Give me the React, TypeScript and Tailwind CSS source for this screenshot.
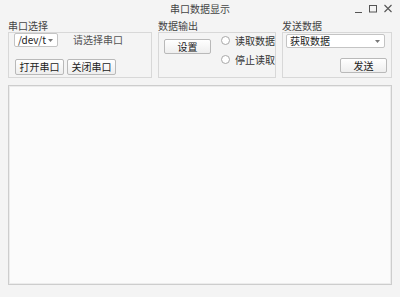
import React from "react";

const font = { fontFamily: '"Noto Sans CJK SC", "Noto Sans", sans-serif' };

function Combo({ text, className }: { text: string; className: string }) {
  return (
    <div
      className={`flex h-[14px] items-center justify-between rounded-[2px] border border-[#c4c4c4] bg-white pl-[3px] pr-[4px] text-[10px] leading-[12px] text-[#222] ${className}`}
    >
      <span className="whitespace-nowrap">{text}</span>
      <svg width="5" height="3" viewBox="0 0 5 3" className="shrink-0">
        <path d="M0 0 L5 0 L2.5 3 Z" fill="#777" />
      </svg>
    </div>
  );
}

function Btn({ text, className }: { text: string; className: string }) {
  return (
    <div
      className={`flex items-center justify-center rounded-[2px] border border-[#b9b9b9] bg-gradient-to-b from-white to-[#eeeeee] text-[10px] leading-[12px] text-[#222] ${className}`}
    >
      {text}
    </div>
  );
}

function Radio({ label }: { label: string }) {
  return (
    <div className="flex h-[13px] items-center gap-[5px] whitespace-nowrap">
      <div className="h-[9px] w-[9px] shrink-0 rounded-full border border-[#a8a8a8] bg-white" />
      <span className="text-[10px] leading-[12px] text-[#333]">{label}</span>
    </div>
  );
}

function Group({
  title,
  width,
  children,
}: {
  title: string;
  width: string;
  children: React.ReactNode;
}) {
  return (
    <div className={`flex flex-col ${width}`}>
      <p className="h-[12px] text-[10px] leading-[12px] text-[#444]">{title}</p>
      <div className="h-[46px] overflow-hidden border border-[#d8d8d8] bg-[#f4f4f4]">
        {children}
      </div>
    </div>
  );
}

export default function App() {
  return (
    <div className="h-[297px] w-[400px] overflow-hidden bg-[#f4f4f4]" style={font}>
      {/* title bar */}
      <div className="relative flex h-[18px] items-center justify-center">
        <span className="text-[10px] leading-[12px] text-[#444]">串口数据显示</span>
        <div className="absolute right-[8px] top-[4px] flex items-center gap-[7px]">
          <svg width="7" height="9" viewBox="0 0 7 9">
            <path d="M0 8.5 H7" stroke="#555" strokeWidth="1" />
          </svg>
          <svg width="8" height="9" viewBox="0 0 8 9">
            <rect x="0.5" y="1.5" width="7" height="6.5" fill="none" stroke="#555" strokeWidth="1" />
          </svg>
          <svg width="8" height="9" viewBox="0 0 8 9">
            <path d="M0.5 1 L7.5 8 M7.5 1 L0.5 8" stroke="#555" strokeWidth="1.1" />
          </svg>
        </div>
      </div>

      {/* group boxes */}
      <div className="mt-[2px] flex pl-[8px]">
        <Group title="串口选择" width="w-[144px]">
          <div className="flex">
            <Combo text="/dev/t" className="ml-[5px] w-[44px]" />
            <span className="ml-[15px] mt-[1px] text-[10px] leading-[12px] text-[#555]">
              请选择串口
            </span>
          </div>
          <div className="mt-[12px] flex gap-[3px] pl-[6px]">
            <Btn text="打开串口" className="h-[16px] w-[49px]" />
            <Btn text="关闭串口" className="h-[16px] w-[49px]" />
          </div>
        </Group>

        <div className="ml-[6px]">
          <Group title="数据输出" width="w-[118px]">
            <div className="flex">
              <Btn text="设置" className="ml-[5px] mt-[6px] h-[15px] w-[48px]" />
              <div className="ml-[10px] mt-[1px] flex flex-col gap-[6px]">
                <Radio label="读取数据" />
                <Radio label="停止读取" />
              </div>
            </div>
          </Group>
        </div>

        <div className="ml-[6px]">
          <Group title="发送数据" width="w-[110px]">
            <div className="flex flex-col">
              <Combo text="获取数据" className="ml-[3px] mt-[1px] w-[99px]" />
              <div className="mt-[10px] flex justify-end pr-[4px]">
                <Btn text="发送" className="h-[15px] w-[47px]" />
              </div>
            </div>
          </Group>
        </div>
      </div>

      {/* output area */}
      <div className="ml-[8px] mt-[7px] h-[200px] w-[384px] border border-[#cdcdcd] bg-[#fbfbfb] shadow-[inset_0_0_0_1px_#ececec]" />
    </div>
  );
}
